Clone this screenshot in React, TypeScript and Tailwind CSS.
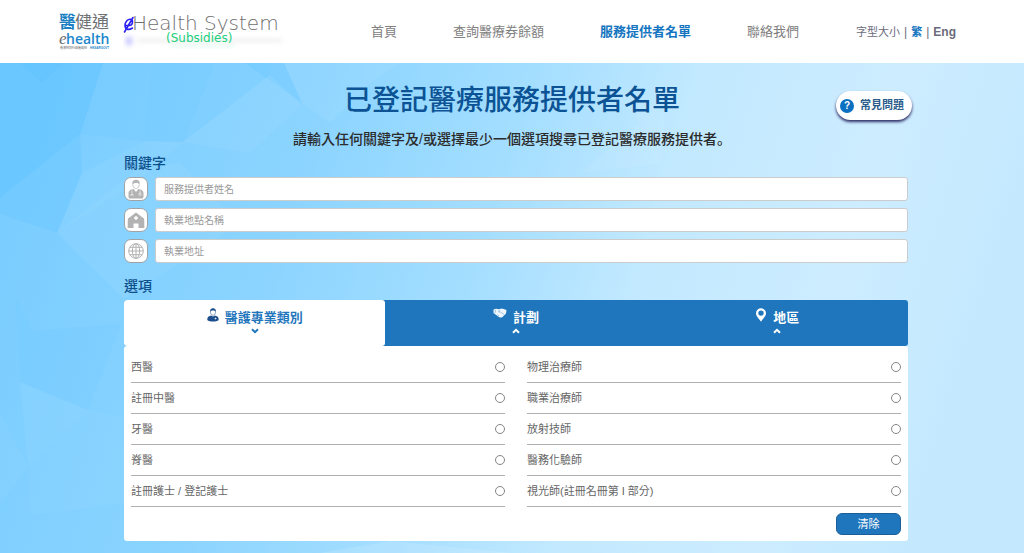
import { useState } from "react";
import type { ReactNode } from "react";

const NAV_ITEMS = [
  { label: "首頁", active: false },
  { label: "查詢醫療券餘額", active: false },
  { label: "服務提供者名單", active: true },
  { label: "聯絡我們", active: false },
];

const PROFESSIONS = [
  ["西醫", "註冊中醫", "牙醫", "脊醫", "註冊護士 / 登記護士"],
  ["物理治療師", "職業治療師", "放射技師", "醫務化驗師", "視光師(註冊名冊第 I 部分)"],
];

function EHealthLogo() {
  return (
    <svg width="52" height="60" viewBox="0 0 52 60" role="img" aria-label="醫健通 ehealth">
      <g fontFamily="'Noto Sans CJK TC', sans-serif" fontSize="17">
        <text x="0" y="26" fill="#1b7fc4" fontWeight="700">醫</text>
        <text x="16" y="26" fill="#6f7174">健通</text>
      </g>
      <text x="0" y="42" fill="#6b6b6b" fontFamily="'Liberation Serif', serif" fontStyle="italic" fontSize="17">e</text>
      <text x="7" y="42" fill="#1b86cb" fontFamily="'Open Sans', sans-serif" fontWeight="600" fontSize="14">health</text>
      <g fontSize="3" fontWeight="700">
        <text x="1" y="47" fill="#8f8f8f" fontFamily="'Noto Sans CJK TC', sans-serif">香港特別行政區政府</text>
        <text x="31" y="47" fill="#1b86cb" fontFamily="'Liberation Sans', sans-serif">HKSARGOVT</text>
      </g>
    </svg>
  );
}

function SubsidiesLogo() {
  return (
    <svg width="163" height="38" viewBox="0 -2 163 38" role="img" aria-label="eHealth System (Subsidies)">
      <defs>
        <filter id="haze" x="-20%" y="-60%" width="140%" height="220%">
          <feGaussianBlur stdDeviation="2" />
        </filter>
      </defs>
      <g filter="url(#haze)">
        <ellipse cx="6" cy="26" rx="4" ry="5" fill="#4f46ff" opacity="0.25" />
        <rect x="14" y="23" width="145" height="5" fill="#8a8a8a" opacity="0.1" />
        <rect x="48" y="29" width="64" height="3" fill="#1fd878" opacity="0.1" />
      </g>
      <path
        d="M2 10.500H7C10 10 10.500 4.500 7.500 4.200C4.500 4 2 7 2 10.500C2 14.500 5.500 15.500 9.500 13M1.500 17L10 2.500"
        fill="none"
        stroke="#2a20f5"
        strokeWidth="1.600"
        strokeLinecap="round"
      />
      <text x="9" y="15" fill="#6e6e6e" fontFamily="'DejaVu Sans', sans-serif" fontWeight="200" fontSize="20">
        Health System
      </text>
      <text x="43" y="27" fill="#22cf7c" fontFamily="'DejaVu Sans', sans-serif" fontSize="12">
        (Subsidies)
      </text>
    </svg>
  );
}

// Low-poly backdrop behind the search form
function Backdrop() {
  return (
    <svg
      className="absolute inset-0 h-full w-full"
      viewBox="0 0 1024 490"
      preserveAspectRatio="none"
      aria-hidden="true"
    >
      <defs>
        <linearGradient id="sky" x1="0" y1="0.1" x2="1" y2="0.25">
          <stop offset="0" stopColor="#78ccff" />
          <stop offset="0.3" stopColor="#8bd4ff" />
          <stop offset="0.5" stopColor="#a4deff" />
          <stop offset="0.66" stopColor="#c2e9ff" />
          <stop offset="0.85" stopColor="#cdecff" />
          <stop offset="1" stopColor="#c4e9ff" />
        </linearGradient>
      </defs>
      <rect width="1024" height="490" fill="url(#sky)" />
      <g fill="#5fc3ff">
        <path d="M0 0H103L80 71L0 135Z" opacity="0.55" />
        <path d="M20 0H64L42 20Z" opacity="0.4" />
        <path d="M0 135L80 71L82 110L57 170L12 155L0 150Z" opacity="0.3" />
        <path d="M103 0H153L145 78L80 71Z" opacity="0.15" />
        <path d="M153 0H215L183 79L145 78Z" opacity="0.2" />
        <path d="M215 0H270V12L183 79Z" opacity="0.12" />
        <path d="M245 0H284L302 40Z" opacity="0.25" />
        <path d="M16 235L34 268L122 260L88 347L20 319Z" opacity="0.12" />
      </g>
      <g fill="#a5deff">
        <path d="M82 110L145 78L183 79L135 120L57 170Z" opacity="0.15" />
        <path d="M57 170L135 108L180 100L240 160L124 236Z" opacity="0.18" />
        <path d="M183 79L270 12L302 42L250 90Z" opacity="0.18" />
        <path d="M0 350L28 404L0 440Z" opacity="0.1" />
        <path d="M88 347L28 404L20 319Z" opacity="0.15" />
        <path d="M88 347L124 354V440L30 452L28 404Z" opacity="0.1" />
      </g>
      <g fill="#ffffff">
        <path d="M284 0H400L370 20L330 60L302 40Z" opacity="0.06" />
        <path d="M600 15L665 50L660 100L580 110L640 60Z" opacity="0.06" />
        <path d="M320 490L390 478L512 490Z" opacity="0.12" />
      </g>
    </svg>
  );
}

function DoctorIcon() {
  return (
    <svg width="18" height="22" viewBox="0 0 18 20" aria-hidden="true">
      <ellipse cx="9" cy="5.500" rx="3.300" ry="4" fill="#fff" stroke="#b9b9b9" strokeWidth="0.700" />
      <path d="M5.500 5C5 2 7 0.700 9 0.700S13 2 12.500 5C11.500 3.500 7 3.500 5.500 5Z" fill="#b5b5b5" />
      <path d="M1.500 18V14C1.500 11.500 4 10.500 6.500 10L9 13L11.500 10C14 10.500 16.500 11.500 16.500 14V18Q16.500 19.500 14.500 19.500H3.500Q1.500 19.500 1.500 18Z" fill="#b3b3b3" />
      <path d="M5 11.500V15M4 17V15.500H6V17M13 11.500V14" stroke="#fff" strokeWidth="0.600" fill="none" />
      <circle cx="13" cy="15.200" r="1.200" fill="none" stroke="#fff" strokeWidth="0.600" />
    </svg>
  );
}

function HouseIcon() {
  return (
    <svg width="18" height="17" viewBox="0 0 18 17" aria-hidden="true">
      <path d="M9 0.500L17 6.500L17.300 9V16H11.500V11.500H6.500V16H0.700V9L1 6.500Z" fill="#b3b3b3" />
      <path d="M9 4V8M7 6H11" stroke="#fff" strokeWidth="1.500" />
    </svg>
  );
}

function GlobeIcon() {
  return (
    <svg width="16" height="16" viewBox="0 0 16 16" fill="none" stroke="#b3b3b3" strokeWidth="1" aria-hidden="true">
      <circle cx="8" cy="8" r="7.300" />
      <ellipse cx="8" cy="8" rx="3.600" ry="7.300" />
      <path d="M8 0.700V15.300M0.700 8H15.300M2 4.300H14M2 11.700H14" />
    </svg>
  );
}

function PersonIcon() {
  return (
    <svg width="12" height="14" viewBox="0 0 12 14" aria-hidden="true">
      <ellipse cx="6" cy="4" rx="2.600" ry="3.300" fill="#fff" stroke="#7a93b5" strokeWidth="0.800" />
      <path d="M3.200 3.500C3 1 4.500 0.300 6 0.300S9 1 8.800 3.500C8 2 4 2 3.200 3.500Z" fill="#1d4f8c" />
      <path d="M0.300 11.500C0.300 8.500 2.500 8 4 7.500L6 8.500L8 7.500C9.500 8 11.700 8.500 11.700 11.500C11.700 14.300 0.300 14.300 0.300 11.500Z" fill="#1d4f8c" />
      <path d="M8.500 9.500V11.500M7.500 10.500H9.500" stroke="#fff" strokeWidth="0.600" />
    </svg>
  );
}

function HandshakeIcon() {
  return (
    <svg width="14" height="10" viewBox="0 0 14 10" aria-hidden="true">
      <path d="M0.500 1.500L3 0.700L6 1.200L9 0.500L13.500 2L13 5.500L9.500 9Q7.500 10 6 9L2.500 6.500L0.500 5Z" fill="#eef5fb" />
      <path d="M6.500 2L5.500 4L7.500 4L11 6.500M4.500 6.500L6 8M2.500 2L2 5" fill="none" stroke="#7fb0dc" strokeWidth="0.700" />
    </svg>
  );
}

function PinIcon() {
  return (
    <svg width="12" height="14" viewBox="0 0 12 14" aria-hidden="true">
      <path
        d="M6 0.300A5 5 0 0 0 1 5.300C1 8.500 4 10.500 6 13.700C8 10.500 11 8.500 11 5.300A5 5 0 0 0 6 0.300ZM6 7.800A2.700 2.700 0 1 1 6 2.400A2.700 2.700 0 0 1 6 7.800Z"
        fill="#fff"
        fillRule="evenodd"
      />
    </svg>
  );
}

function Caret({ open }: { open: boolean }) {
  return (
    <svg width="8" height="6" viewBox="0 0 8 6" fill="none" stroke="currentColor" strokeWidth="2" aria-hidden="true">
      <path d={open ? "M1 1.300L4 4.200L7 1.300" : "M1 4.700L4 1.800L7 4.700"} />
    </svg>
  );
}

const KEYWORDS: { id: string; label: string; icon: ReactNode }[] = [
  { id: "provider", label: "服務提供者姓名", icon: <DoctorIcon /> },
  { id: "place", label: "執業地點名稱", icon: <HouseIcon /> },
  { id: "address", label: "執業地址", icon: <GlobeIcon /> },
];

const TABS: { label: string; icon: ReactNode }[] = [
  { label: "醫護專業類別", icon: <PersonIcon /> },
  { label: "計劃", icon: <HandshakeIcon /> },
  { label: "地區", icon: <PinIcon /> },
];

export default function App() {
  const [tab, setTab] = useState(0);
  const [profession, setProfession] = useState<string | null>(null);

  return (
    <div className="flex min-h-screen flex-col bg-white font-['Liberation_Sans','Noto_Sans_CJK_TC',sans-serif]">
      <header className="flex h-[63px] items-center pr-[68px] pl-[59px]">
        <a href="#home" className="flex items-center gap-3">
          <EHealthLogo />
          <SubsidiesLogo />
        </a>
        <nav className="ml-[85px] flex gap-14 text-[13px] leading-5 whitespace-nowrap">
          {NAV_ITEMS.map((item) => (
            <a
              key={item.label}
              href="#nav"
              className={item.active ? "font-bold text-[#1675c0]" : "text-[#808080]"}
            >
              {item.label}
            </a>
          ))}
        </nav>
        <div className="ml-auto flex gap-1 text-[12px] leading-5 whitespace-nowrap text-[#6b6b7b]">
          <a href="#size" className="text-[11px]">字型大小</a>
          <span>|</span>
          <a href="#zh" className="text-[11px] font-bold text-[#1675c0]">繁</a>
          <span>|</span>
          <a href="#en" className="font-bold">Eng</a>
        </div>
      </header>

      <main className="relative flex-1">
        <Backdrop />
        <div className="relative pt-5 pb-3">
          <div className="grid grid-cols-[1fr_auto_1fr] px-28">
            <h1 className="col-start-2 h-[38px] font-['Liberation_Sans','Noto_Sans_CJK_TC_Medium','Noto_Sans_CJK_TC',sans-serif] text-[28px] leading-9 font-medium text-[#0b5394]">
              已登記醫療服務提供者名單
            </h1>
            <button
              type="button"
              className="mt-2 flex h-[29px] items-center gap-1.5 justify-self-end rounded-full bg-white pr-2 pl-1 text-[11px] font-bold text-[#2b5d8c] shadow-[0_2px_3px_#2f2f66]"
            >
              <span className="flex size-3.5 items-center justify-center rounded-full bg-[#0b6fc2] text-[10px] leading-none text-white">
                ?
              </span>
              常見問題
            </button>
          </div>
          <p className="mt-2 h-5 text-center font-['Liberation_Sans','Noto_Sans_CJK_TC_Medium','Noto_Sans_CJK_TC',sans-serif] text-[14px] leading-5 font-medium text-[#2b2b2b]">
            請輸入任何關鍵字及/或選擇最少一個選項搜尋已登記醫療服務提供者
            <span className="font-['Liberation_Sans','Noto_Sans_CJK_SC',sans-serif]" lang="zh-CN">。</span>
          </p>

          <form className="pr-[116px] pl-[124px]" onSubmit={(e) => e.preventDefault()}>
            <h2 className="mt-1 font-['Liberation_Sans','Noto_Sans_CJK_TC_Medium','Noto_Sans_CJK_TC',sans-serif] text-[14px] leading-5 font-medium text-[#0d4f8b]">
              關鍵字
            </h2>
            <div className="mt-1 flex flex-col gap-[7px]">
              {KEYWORDS.map((field) => (
                <div key={field.id} className="flex gap-[7px]">
                  <label
                    htmlFor={field.id}
                    aria-label={field.label}
                    className="flex size-6 shrink-0 items-center justify-center rounded-[7px] border border-[#a3a3a3] bg-white"
                  >
                    {field.icon}
                  </label>
                  <input
                    id={field.id}
                    type="text"
                    placeholder={field.label}
                    className="h-6 min-w-0 flex-1 rounded-[3px] border border-[#ccc] bg-white px-2 text-[10px] text-[#555] placeholder:text-[#999]"
                  />
                </div>
              ))}
            </div>

            <h2 className="mt-[13px] font-['Liberation_Sans','Noto_Sans_CJK_TC_Medium','Noto_Sans_CJK_TC',sans-serif] text-[14px] leading-5 font-medium text-[#0d4f8b]">
              選項
            </h2>
            <div className="mt-1 grid grid-cols-3 rounded-[3px] bg-[#1f76bd]" role="tablist">
              {TABS.map((item, i) => (
                <button
                  key={item.label}
                  type="button"
                  role="tab"
                  aria-selected={tab === i}
                  onClick={() => setTab(i)}
                  className={
                    tab === i
                      ? "flex h-[46px] flex-col items-center rounded-[3px] bg-white pt-2 text-[#1f76bd]"
                      : "flex h-[46px] flex-col items-center rounded-[3px] pt-2 text-white"
                  }
                >
                  <span className="flex gap-1.5 text-[13px] leading-5 font-bold">
                    {item.icon}
                    {item.label}
                  </span>
                  <Caret open={tab === i} />
                </button>
              ))}
            </div>

            <div className="rounded-[3px] bg-white px-[7px] py-1.5">
              <div className="grid grid-cols-2 gap-[22px]">
                {PROFESSIONS.map((column, i) => (
                  <div key={i}>
                    {column.map((name) => (
                      <label
                        key={name}
                        className="flex h-[31px] items-center justify-between border-b border-[#b0b0b0] text-[11px] text-[#666]"
                      >
                        {name}
                        <input
                          type="radio"
                          name="profession"
                          checked={profession === name}
                          onChange={() => setProfession(name)}
                          className="size-2.5 appearance-none rounded-full border border-[#858585] bg-white checked:bg-[#1f76bd]"
                        />
                      </label>
                    ))}
                  </div>
                ))}
              </div>
              <div className="mt-1.5 flex justify-end">
                <button
                  type="button"
                  onClick={() => setProfession(null)}
                  className="h-[22px] w-[65px] rounded-md border border-[#1a5f99] bg-[#1f76bd] text-[11px] leading-none text-white"
                >
                  清除
                </button>
              </div>
            </div>
          </form>
        </div>
      </main>
    </div>
  );
}
